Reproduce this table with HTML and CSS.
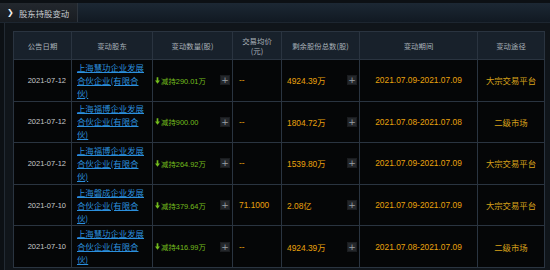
FILE: index.html
```html
<!DOCTYPE html>
<html lang="zh">
<head>
<meta charset="utf-8">
<link rel="stylesheet" href="styles.css">
</head>
<body>
<div class="titlebar">
  <div class="tab"><span class="chev">&#x276F;</span><span class="tab-text">股东持股变动</span></div>
</div>
<div class="panel">
  <table class="grid">
    <colgroup>
      <col class="c1"><col class="c2"><col class="c3"><col class="c4"><col class="c5"><col class="c6"><col class="c7">
    </colgroup>
    <thead>
      <tr>
        <th>公告日期</th>
        <th>变动股东</th>
        <th>变动数量(股)</th>
        <th>交易均价<br>(元)</th>
        <th>剩余股份总数(股)</th>
        <th>变动期间</th>
        <th>变动途径</th>
      </tr>
    </thead>
    <tbody>
      <tr>
        <td class="date">2021-07-12</td>
        <td class="holder"><a href="#">上海慧功企业发展合伙企业(有限合伙)</a></td>
        <td class="qty"><div class="cellrow"><span class="dec"><svg class="arr" viewBox="0 0 6 8" width="5" height="7"><path d="M2 0h2v4h2L3 8 0 4h2z"/></svg>减持290.01万</span><span class="plus">+</span></div></td>
        <td class="price">--</td>
        <td class="remain"><div class="cellrow"><span>4924.39万</span><span class="plus">+</span></div></td>
        <td class="period">2021.07.09-2021.07.09</td>
        <td class="way">大宗交易平台</td>
      </tr>
      <tr>
        <td class="date">2021-07-12</td>
        <td class="holder"><a href="#">上海福博企业发展合伙企业(有限合伙)</a></td>
        <td class="qty"><div class="cellrow"><span class="dec"><svg class="arr" viewBox="0 0 6 8" width="5" height="7"><path d="M2 0h2v4h2L3 8 0 4h2z"/></svg>减持900.00</span><span class="plus">+</span></div></td>
        <td class="price">--</td>
        <td class="remain"><div class="cellrow"><span>1804.72万</span><span class="plus">+</span></div></td>
        <td class="period">2021.07.08-2021.07.08</td>
        <td class="way">二级市场</td>
      </tr>
      <tr>
        <td class="date">2021-07-12</td>
        <td class="holder"><a href="#">上海福博企业发展合伙企业(有限合伙)</a></td>
        <td class="qty"><div class="cellrow"><span class="dec"><svg class="arr" viewBox="0 0 6 8" width="5" height="7"><path d="M2 0h2v4h2L3 8 0 4h2z"/></svg>减持264.92万</span><span class="plus">+</span></div></td>
        <td class="price">--</td>
        <td class="remain"><div class="cellrow"><span>1539.80万</span><span class="plus">+</span></div></td>
        <td class="period">2021.07.09-2021.07.09</td>
        <td class="way">大宗交易平台</td>
      </tr>
      <tr>
        <td class="date">2021-07-10</td>
        <td class="holder"><a href="#">上海磐成企业发展合伙企业(有限合伙)</a></td>
        <td class="qty"><div class="cellrow"><span class="dec"><svg class="arr" viewBox="0 0 6 8" width="5" height="7"><path d="M2 0h2v4h2L3 8 0 4h2z"/></svg>减持379.64万</span><span class="plus">+</span></div></td>
        <td class="price">71.1000</td>
        <td class="remain"><div class="cellrow"><span>2.08亿</span><span class="plus">+</span></div></td>
        <td class="period">2021.07.09-2021.07.09</td>
        <td class="way">大宗交易平台</td>
      </tr>
      <tr>
        <td class="date">2021-07-10</td>
        <td class="holder"><a href="#">上海慧功企业发展合伙企业(有限合伙)</a></td>
        <td class="qty"><div class="cellrow"><span class="dec"><svg class="arr" viewBox="0 0 6 8" width="5" height="7"><path d="M2 0h2v4h2L3 8 0 4h2z"/></svg>减持416.99万</span><span class="plus">+</span></div></td>
        <td class="price">--</td>
        <td class="remain"><div class="cellrow"><span>4924.39万</span><span class="plus">+</span></div></td>
        <td class="period">2021.07.08-2021.07.09</td>
        <td class="way">二级市场</td>
      </tr>
    </tbody>
  </table>
</div>
</body>
</html>
```
FILE: styles.css
```css
html, body {
  margin: 0;
  padding: 0;
  background: #0c1014;
  font-family: "Liberation Sans", "Noto Sans CJK SC", sans-serif;
  overflow: hidden;
  height: 270px;
}
.titlebar {
  margin-top: 3px;
  height: 19px;
  background: linear-gradient(#1c2834, #111922);
  display: flex;
  border-bottom: 1px solid #1d2630;
}
.tab {
  width: 78px;
  height: 19px;
  background: linear-gradient(#23282e, #181c21);
  border-right: 1px solid #2e353d;
  display: flex;
  align-items: center;
  box-sizing: border-box;
  padding-left: 7px;
}
.chev {
  color: #f0f0f0;
  font-size: 8px;
  font-family: "DejaVu Sans", sans-serif;
  font-weight: bold;
  width: 12px;
}
.tab-text {
  color: #c8ccd0;
  font-size: 8.4px;
  font-family: "Noto Sans CJK SC", sans-serif;
}
.panel {
  margin-left: 4px;
  border-left: 1px solid #222a33;
  background: #10151a;
  padding: 8px 0 0 8px;
  height: 240px;
}
.grid {
  border-collapse: collapse;
  table-layout: fixed;
  width: 531px;
}
.c1 { width: 58px; }
.c2 { width: 81px; }
.c3 { width: 80px; }
.c4 { width: 49px; }
.c5 { width: 78px; }
.c6 { width: 118px; }
.c7 { width: 67px; }
.grid th, .grid td {
  border: 1px solid #2a3440;
  padding: 0;
}
.grid th {
  background: #18212b;
  color: #aab2ba;
  font-weight: normal;
  font-size: 7.4px;
  font-family: "Noto Sans CJK SC", sans-serif;
  line-height: 10px;
  height: 27px;
  text-align: center;
}
.grid td {
  background: #050607;
  height: 40.6px;
  vertical-align: middle;
  font-size: 8.4px;
}
.date {
  color: #c6c9cc;
  font-size: 7.5px !important;
  text-align: right;
  padding-right: 5px !important;
}
.holder {
  padding-left: 5px !important;
  padding-right: 8px !important;
  line-height: 12px;
}
.holder a {
  color: #2b8fdc;
  text-decoration: underline;
  font-size: 8.4px;
  font-family: "Noto Sans CJK SC", sans-serif;
}
.cellrow {
  display: flex;
  align-items: center;
  justify-content: space-between;
}
.qty .cellrow { padding: 0 2px 0 2px; }
.dec {
  color: #74bd1d;
  font-size: 7.4px;
  display: flex;
  align-items: center;
}
.arr {
  fill: #74bd1d;
  margin-right: 1px;
}
.plus {
  width: 10px;
  height: 10px;
  background: #24272b;
  border: 1px solid #1a1c1f;
  box-sizing: border-box;
  color: #9aa0a6;
  font-size: 9px;
  line-height: 8px;
  text-align: center;
  font-family: "DejaVu Sans", sans-serif;
}
.price {
  color: #e9a10d;
  padding-left: 6px !important;
}
.remain .cellrow { padding: 0 2px 0 5px; }
.remain span:first-child { color: #e9a10d; }
.period {
  color: #e9a10d;
  text-align: center;
}
.way {
  color: #d8a21a;
  text-align: center;
  font-family: "Noto Sans CJK SC", sans-serif;
}
```
